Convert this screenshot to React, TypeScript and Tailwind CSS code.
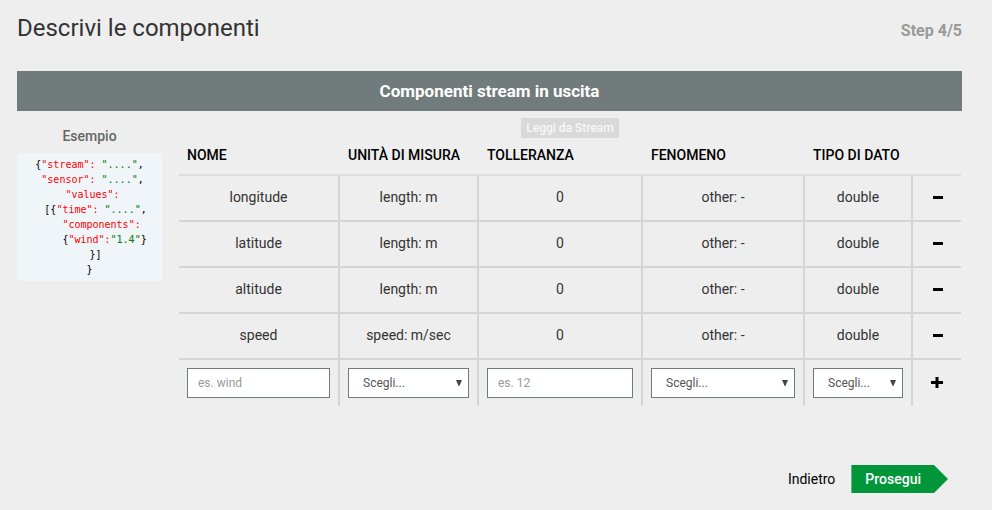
import type { ReactNode } from "react";

type Component = { name: string; unit: string; tolerance: string; phenomenon: string; type: string };

const components: Component[] = [
  { name: "longitude", unit: "length: m", tolerance: "0", phenomenon: "other: -", type: "double" },
  { name: "latitude", unit: "length: m", tolerance: "0", phenomenon: "other: -", type: "double" },
  { name: "altitude", unit: "length: m", tolerance: "0", phenomenon: "other: -", type: "double" },
  { name: "speed", unit: "speed: m/sec", tolerance: "0", phenomenon: "other: -", type: "double" },
];

const headings = ["NOME", "UNITÀ DI MISURA", "TOLLERANZA", "FENOMENO", "TIPO DI DATO"];

const fieldClass =
  "block h-[30px] w-full rounded-none border border-[#717b7b] bg-white text-xs text-[#555] placeholder:text-[#999] focus:outline-none";

function Key({ children }: { children: ReactNode }) {
  return <span className="text-[#ff0000]">{children}</span>;
}

function Value({ children }: { children: ReactNode }) {
  return <span className="text-[#008000]">{children}</span>;
}

function Picker({ label }: { label: string }) {
  return (
    <div className="relative">
      <select aria-label={label} className={`${fieldClass} appearance-none pr-5 pl-[14px]`}>
        <option>Scegli...</option>
      </select>
      <svg
        viewBox="0 0 6 6"
        className="pointer-events-none absolute top-3 right-[7px] size-[6px] fill-[#444]"
        aria-hidden="true"
      >
        <path d="M0 0H6L3.4 6H2.6Z" />
      </svg>
    </div>
  );
}

function Cell({ children }: { children: ReactNode }) {
  return <td className="border-r-2 border-b-2 border-[#d5d5d5] px-2 pb-0.5 text-center">{children}</td>;
}

function EntryCell({ children }: { children: ReactNode }) {
  return <td className="border-r-2 border-[#d5d5d5] px-2">{children}</td>;
}

function Example() {
  return (
    <aside className="w-[145px] shrink-0 pt-4 text-center">
      <h3 className="text-sm leading-[18px] font-medium text-[#666]">Esempio</h3>
      <pre className="mt-2 rounded-sm bg-[#f0f5f9] py-1 font-['DejaVu_Sans_Mono',monospace] text-[10px] leading-[15px] text-black">
        <code className="block font-['DejaVu_Sans_Mono',monospace]">
          <span className="block">{"{"}<Key>"stream":</Key> <Value>"...."</Value>,</span>
          <span className="block">{" "}<Key>"sensor":</Key> <Value>"...."</Value>,</span>
          <span className="block">{" "}<Key>"values":</Key></span>
          <span className="block">{"  [{"}<Key>"time":</Key> <Value>"...."</Value>,</span>
          <span className="block">{"    "}<Key>"components":</Key></span>
          <span className="block">{"     {"}<Key>"wind":</Key><Value>"1.4"</Value>{"}"}</span>
          <span className="block">{"  }]"}</span>
          <span className="block">{"}"}</span>
        </code>
      </pre>
    </aside>
  );
}

function ComponentsTable() {
  return (
    <table className="w-full table-fixed border-separate border-spacing-0 text-sm text-[#333]">
      <colgroup>
        <col className="w-[161px]" />
        <col className="w-[139px]" />
        <col className="w-[164px]" />
        <col className="w-[162px]" />
        <col className="w-[108px]" />
        <col className="w-[48px]" />
      </colgroup>
      <thead>
        <tr className="h-[38px]">
          {headings.map((heading) => (
            <th
              key={heading}
              className="border-b-2 border-[#ddd] px-2 pt-0 pb-0.5 text-left align-middle font-medium whitespace-nowrap text-black"
            >
              {heading}
            </th>
          ))}
          <th className="border-b-2 border-[#ddd]" aria-label="Azioni" />
        </tr>
      </thead>
      <tbody>
        {components.map((component) => (
          <tr key={component.name} className="h-[46px]">
            <Cell>{component.name}</Cell>
            <Cell>{component.unit}</Cell>
            <Cell>{component.tolerance}</Cell>
            <Cell>{component.phenomenon}</Cell>
            <Cell>{component.type}</Cell>
            <td className="border-b-2 border-[#d5d5d5] pb-0.5 pl-0.5">
              <button type="button" aria-label={`Rimuovi ${component.name}`} className="mx-auto block">
                <svg viewBox="0 0 12 12" className="size-3 fill-black" aria-hidden="true">
                  <rect x="1" y="5" width="10" height="3" />
                </svg>
              </button>
            </td>
          </tr>
        ))}
        <tr className="h-[46px]">
          <EntryCell>
            <input aria-label="Nome" placeholder="es. wind" className={`${fieldClass} px-[10px]`} />
          </EntryCell>
          <EntryCell>
            <Picker label="Unità di misura" />
          </EntryCell>
          <EntryCell>
            <input aria-label="Tolleranza" placeholder="es. 12" className={`${fieldClass} px-[10px]`} />
          </EntryCell>
          <EntryCell>
            <Picker label="Fenomeno" />
          </EntryCell>
          <EntryCell>
            <Picker label="Tipo di dato" />
          </EntryCell>
          <td className="pb-0.5">
            <button type="button" aria-label="Aggiungi componente" className="mx-auto block">
              <svg viewBox="0 0 12 12" className="size-3 fill-black" aria-hidden="true">
                <path d="M4.5 1H7.5V5H12V8H7.5V12H4.5V8H0V5H4.5Z" />
              </svg>
            </button>
          </td>
        </tr>
      </tbody>
    </table>
  );
}

export default function App() {
  return (
    <main className="min-h-screen bg-[#eee] pt-3 pr-[30px] pb-4 pl-[17px] font-[Roboto,sans-serif]">
      <header className="flex items-center justify-between">
        <h1 className="text-2xl leading-8 text-[#333]">Descrivi le componenti</h1>
        <p className="pt-1.5 text-base leading-5 font-bold text-[#999]">Step 4/5</p>
      </header>

      <h2 className="mt-[27px] bg-[#717b7b] text-center text-[17px] leading-10 font-bold text-white">
        Componenti stream in uscita
      </h2>

      <div className="flex gap-[17px] pr-px">
        <Example />
        <section className="min-w-0 flex-1 pt-[7px]">
          <button
            type="button"
            disabled
            className="mx-auto block h-5 bg-[#d9d9d9] px-[5px] text-xs leading-5 font-medium text-[#f7f7f7]"
          >
            Leggi da Stream
          </button>
          <ComponentsTable />
        </section>
      </div>

      <nav className="mt-[59px] mr-[14px] flex items-center justify-end gap-4 text-sm">
        <a href="#indietro" className="text-black">
          Indietro
        </a>
        <button
          type="button"
          className="h-7 bg-[#009639] pr-[27px] pl-[14px] font-medium text-white [clip-path:polygon(0_0,calc(100%_-_14px)_0,100%_50%,calc(100%_-_14px)_100%,0_100%)]"
        >
          Prosegui
        </button>
      </nav>
    </main>
  );
}
